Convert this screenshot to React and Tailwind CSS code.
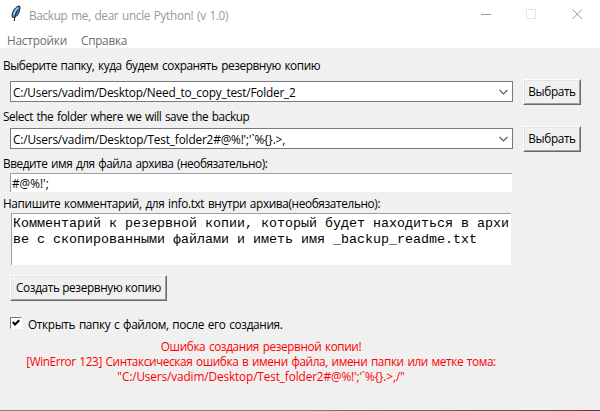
import React from 'react';

function Feather() {
  return (
    <svg width="12" height="17" viewBox="0 0 12 17" className="ml-[10px] mt-[5px] shrink-0">
      <path d="M2.500 12.500C1.200 9.500 3 5.500 5.500 3C7.300 1.200 9 .8 9.800 1.200C10.400 3 9.500 7.500 7.500 10C6.500 11.500 4.500 12.300 3.500 12.500Z" fill="#4a8cc6" stroke="#17202b" strokeWidth="1" />
      <path d="M7.600 2.800C5.600 4.800 4.300 7.500 3.600 10.300" stroke="#9ccbf2" strokeWidth="1.300" fill="none" />
      <path d="M8 4.500C6 7.500 4.800 11 4.300 16" stroke="#14191f" strokeWidth="1" fill="none" />
    </svg>
  );
}

function Label({ className, children }) {
  return <div className={`ml-[3px] h-4 whitespace-nowrap leading-4 ${className}`}>{children}</div>;
}

function RaisedButton({ className, children }) {
  return (
    <button className={`h-[26px] shrink-0 border border-t-white border-l-white border-b-[#696969] border-r-[#696969] ${className}`}>
      <span className="flex h-full items-center justify-center whitespace-nowrap border border-t-[#e3e3e3] border-l-[#e3e3e3] border-b-[#a0a0a0] border-r-[#a0a0a0]">
        {children}
      </span>
    </button>
  );
}

function PathRow({ className, children }) {
  return (
    <div className="ml-[10px] flex h-[26px] items-start">
      <div className="mt-[2px] flex h-[21px] w-[503px] items-center justify-between border border-[#7a7a7a] bg-white pl-[2px] pr-[4px]">
        <span className={`whitespace-nowrap leading-4 ${className}`}>{children}</span>
        <svg width="9" height="6" viewBox="0 0 9 6">
          <path d="M.5 .8L4.500 4.800L8.500 .8" stroke="#555" strokeWidth="1.200" fill="none" />
        </svg>
      </div>
      <RaisedButton className="ml-[10px] w-[58px] tracking-[-0.39px]">Выбрать</RaisedButton>
    </div>
  );
}

export default function App() {
  return (
    <div className="flex h-[411px] w-[600px] flex-col overflow-hidden bg-[#f0f0f0] font-['Open_Sans','Noto_Sans',sans-serif] text-[11.8px] text-black [word-spacing:1px]">
      <header className="flex h-[30px] shrink-0 bg-white text-[#999]">
        <Feather />
        <span className="ml-[7px] mt-[7px] whitespace-nowrap leading-4 tracking-[-0.34px]">Backup me, dear uncle Python! (v 1.0)</span>
        <svg width="104" height="12" viewBox="0 0 104 12" className="ml-auto mr-[16px] mt-[8px]" fill="none">
          <path d="M1 6.500H11" stroke="#999" />
          <rect x="46.500" y="1.500" width="9" height="9" stroke="#e5e5e5" />
          <path d="M92.500 1.500L102 11M102 1.500L92.500 11" stroke="#999" />
        </svg>
      </header>
      <nav className="flex h-[18px] shrink-0 bg-white pl-[7px] leading-[20px] text-[#6d6d6d]">
        <span className="w-[74px] tracking-[-0.2px]">Настройки</span>
        <span className="tracking-[-0.28px]">Справка</span>
      </nav>
      <main className="flex h-[362px] flex-col pt-[9px]">
        <Label className="tracking-[-0.41px]">Выберите папку, куда будем сохранять резервную копию</Label>
        <div className="h-[6px]" />
        <PathRow className="tracking-[-0.19px]">C:/Users/vadim/Desktop/Need_to_copy_test/Folder_2</PathRow>
        <Label className="mt-[3px] tracking-[-0.44px]">Select the folder where we will save the backup</Label>
        <div className="h-[2px]" />
        <PathRow className="tracking-[-0.16px]">{"C:/Users/vadim/Desktop/Test_folder2#@%!';'`%{}.>,"}</PathRow>
        <Label className="mt-[3px] tracking-[-0.45px]">Введите имя для файла архива (необязательно):</Label>
        <div className="ml-[10px] mt-[2px] h-[19px] w-[502px] shrink-0 border-l border-t border-[#a0a0a0] bg-white pl-px leading-[18px] tracking-[0px]">{"#@%!';"}</div>
        <Label className="mt-[3px] tracking-[-0.36px]">Напишите комментарий, для info.txt внутри архива(необязательно):</Label>
        <div className="ml-[11px] mt-[2px] h-[52px] w-[500px] shrink-0 whitespace-nowrap border-l border-t border-[#a0a0a0] bg-white pl-px pt-[2px] font-['Liberation_Mono',monospace] text-[13.333px] leading-4 [word-spacing:0px]">
          Комментарий к резервной копии, который будет находиться в архи<br />ве с скопированными файлами и иметь имя _backup_readme.txt
        </div>
        <RaisedButton className="ml-[10px] mt-[10px] w-[157px] tracking-[-0.36px]">Создать резервную копию</RaisedButton>
        <div className="ml-[10px] mt-[14px] flex h-4 shrink-0 items-center">
          <span className="flex size-[12px] items-center justify-center border border-t-[#777] border-l-[#777] border-b-white border-r-white bg-white">
            <svg width="8" height="8" viewBox="0 0 8 8">
              <path d="M.8 3L3 5.500L7.200 1.300" stroke="#000" strokeWidth="2" fill="none" />
            </svg>
          </span>
          <span className="ml-[6px] whitespace-nowrap pt-px leading-4 tracking-[-0.35px]">Открыть папку с файлом, после его создания.</span>
        </div>
        <div className="mt-[8px] flex w-[522px] shrink-0 flex-col items-center whitespace-nowrap leading-[15px] text-[#ff0000]">
          <span className="tracking-[-0.4px]">Ошибка создания резервной копии!</span>
          <span className="tracking-[-0.4px]">[WinError 123] Синтаксическая ошибка в имени файла, имени папки или метке тома:</span>
          <span className="tracking-[-0.12px]">{"\"C:/Users/vadim/Desktop/Test_folder2#@%!';'`%{}.>,/\""}</span>
        </div>
      </main>
      <footer className="h-px shrink-0 bg-gradient-to-r from-[#98756d] via-[#8a7868] to-[#6e3549]" />
    </div>
  );
}
